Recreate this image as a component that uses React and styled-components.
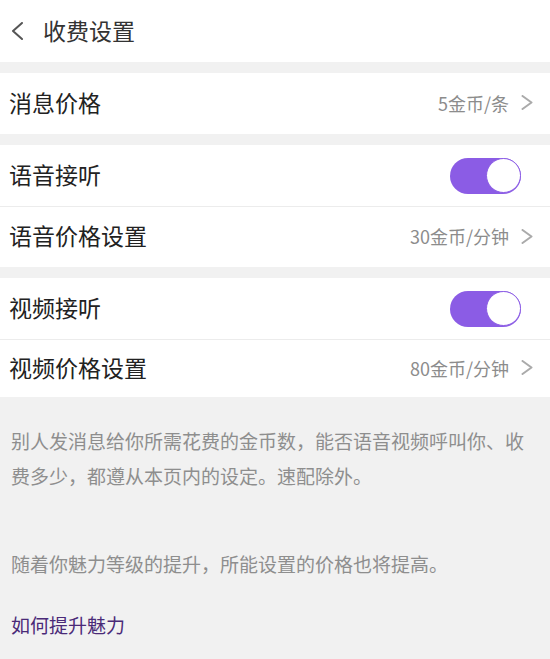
import React from "react";
import styled, { createGlobalStyle } from "styled-components";

const Global = createGlobalStyle`
  html, body { margin: 0; padding: 0; background: #f1f1f1; }
  body { font-family: "Noto Sans CJK SC", "Noto Sans", sans-serif; }
`;

const Page = styled.div`
  width: 550px;
  min-height: 659px;
  background: #f1f1f1;
  display: flex;
  flex-direction: column;
`;

const Header = styled.header`
  height: 62px;
  background: #fff;
  display: flex;
  align-items: center;
  padding-left: 11px;
  gap: 20px;
  margin-bottom: 11px;
`;

const Title = styled.h1`
  margin: 0;
  font-size: 23px;
  font-weight: 400;
  color: #333;
  line-height: 1;
  padding-bottom: 1px;
`;

const Group = styled.section`
  background: #fff;
  display: flex;
  flex-direction: column;
  margin-bottom: ${(p) => (p.$last ? "0" : "11px")};
`;

const Row = styled.div`
  height: ${(p) => p.$h}px;
  display: flex;
  align-items: center;
  justify-content: space-between;
  padding: 0 17px 0 9px;
  border-top: ${(p) => (p.$divider ? "1px solid #ececec" : "none")};
`;

const Label = styled.span`
  font-size: 23px;
  color: #222;
  line-height: 1;
  padding-bottom: 3px;
`;

const Value = styled.span`
  display: flex;
  align-items: center;
  gap: 12px;
  font-size: 18px;
  color: #8c8c8c;
  line-height: 1;
  padding-bottom: 2px;
`;

const Toggle = styled.span`
  width: 71px;
  height: 36px;
  border-radius: 18px;
  background: #8b5ce5;
  display: flex;
  justify-content: flex-end;
  margin-right: 12px;
`;

const Knob = styled.span`
  width: 33px;
  height: 33px;
  border-radius: 50%;
  background: #fff;
  border: 1.5px solid #8b5ce5;
`;

const Footer = styled.div`
  padding: 26px 11px 0 11px;
  display: flex;
  flex-direction: column;
`;

const Note = styled.p`
  margin: 0 0 ${(p) => p.$gap}px 0;
  font-size: 19px;
  line-height: 35px;
  color: #8e8e8e;
`;

const Link = styled.a`
  font-size: 19px;
  line-height: 35px;
  color: #4a2a78;
  text-decoration: none;
`;

const Chevron = ({ color = "#aaa", w = 12, h = 15, sw = 2 }) => (
  <svg width={w} height={h} viewBox={`0 0 ${w} ${h}`} fill="none">
    <polyline
      points={`1.5,1 ${w - 1.5},${h / 2} 1.5,${h - 1}`}
      stroke={color}
      strokeWidth={sw}
      strokeLinecap="round"
      strokeLinejoin="round"
    />
  </svg>
);

const BackIcon = () => (
  <svg width="12" height="18" viewBox="0 0 12 18" fill="none">
    <polyline
      points="11,1 2,9 11,17"
      stroke="#555"
      strokeWidth="2"
      strokeLinecap="round"
      strokeLinejoin="round"
    />
  </svg>
);

const Switch = () => (
  <Toggle>
    <Knob />
  </Toggle>
);

export default function App() {
  return (
    <Page>
      <Global />
      <Header>
        <BackIcon />
        <Title>收费设置</Title>
      </Header>
      <Group>
        <Row $h={61}>
          <Label>消息价格</Label>
          <Value>
            5金币/条
            <Chevron />
          </Value>
        </Row>
      </Group>
      <Group>
        <Row $h={61}>
          <Label>语音接听</Label>
          <Switch />
        </Row>
        <Row $h={60} $divider>
          <Label>语音价格设置</Label>
          <Value>
            30金币/分钟
            <Chevron />
          </Value>
        </Row>
      </Group>
      <Group $last>
        <Row $h={61}>
          <Label>视频接听</Label>
          <Switch />
        </Row>
        <Row $h={57} $divider>
          <Label>视频价格设置</Label>
          <Value>
            80金币/分钟
            <Chevron />
          </Value>
        </Row>
      </Group>
      <Footer>
        <Note $gap={53}>
          别人发消息给你所需花费的金币数，能否语音视频呼叫你、收费多少，都遵从本页内的设定。速配除外。
        </Note>
        <Note $gap={26}>随着你魅力等级的提升，所能设置的价格也将提高。</Note>
        <Link href="#">如何提升魅力</Link>
      </Footer>
    </Page>
  );
}
